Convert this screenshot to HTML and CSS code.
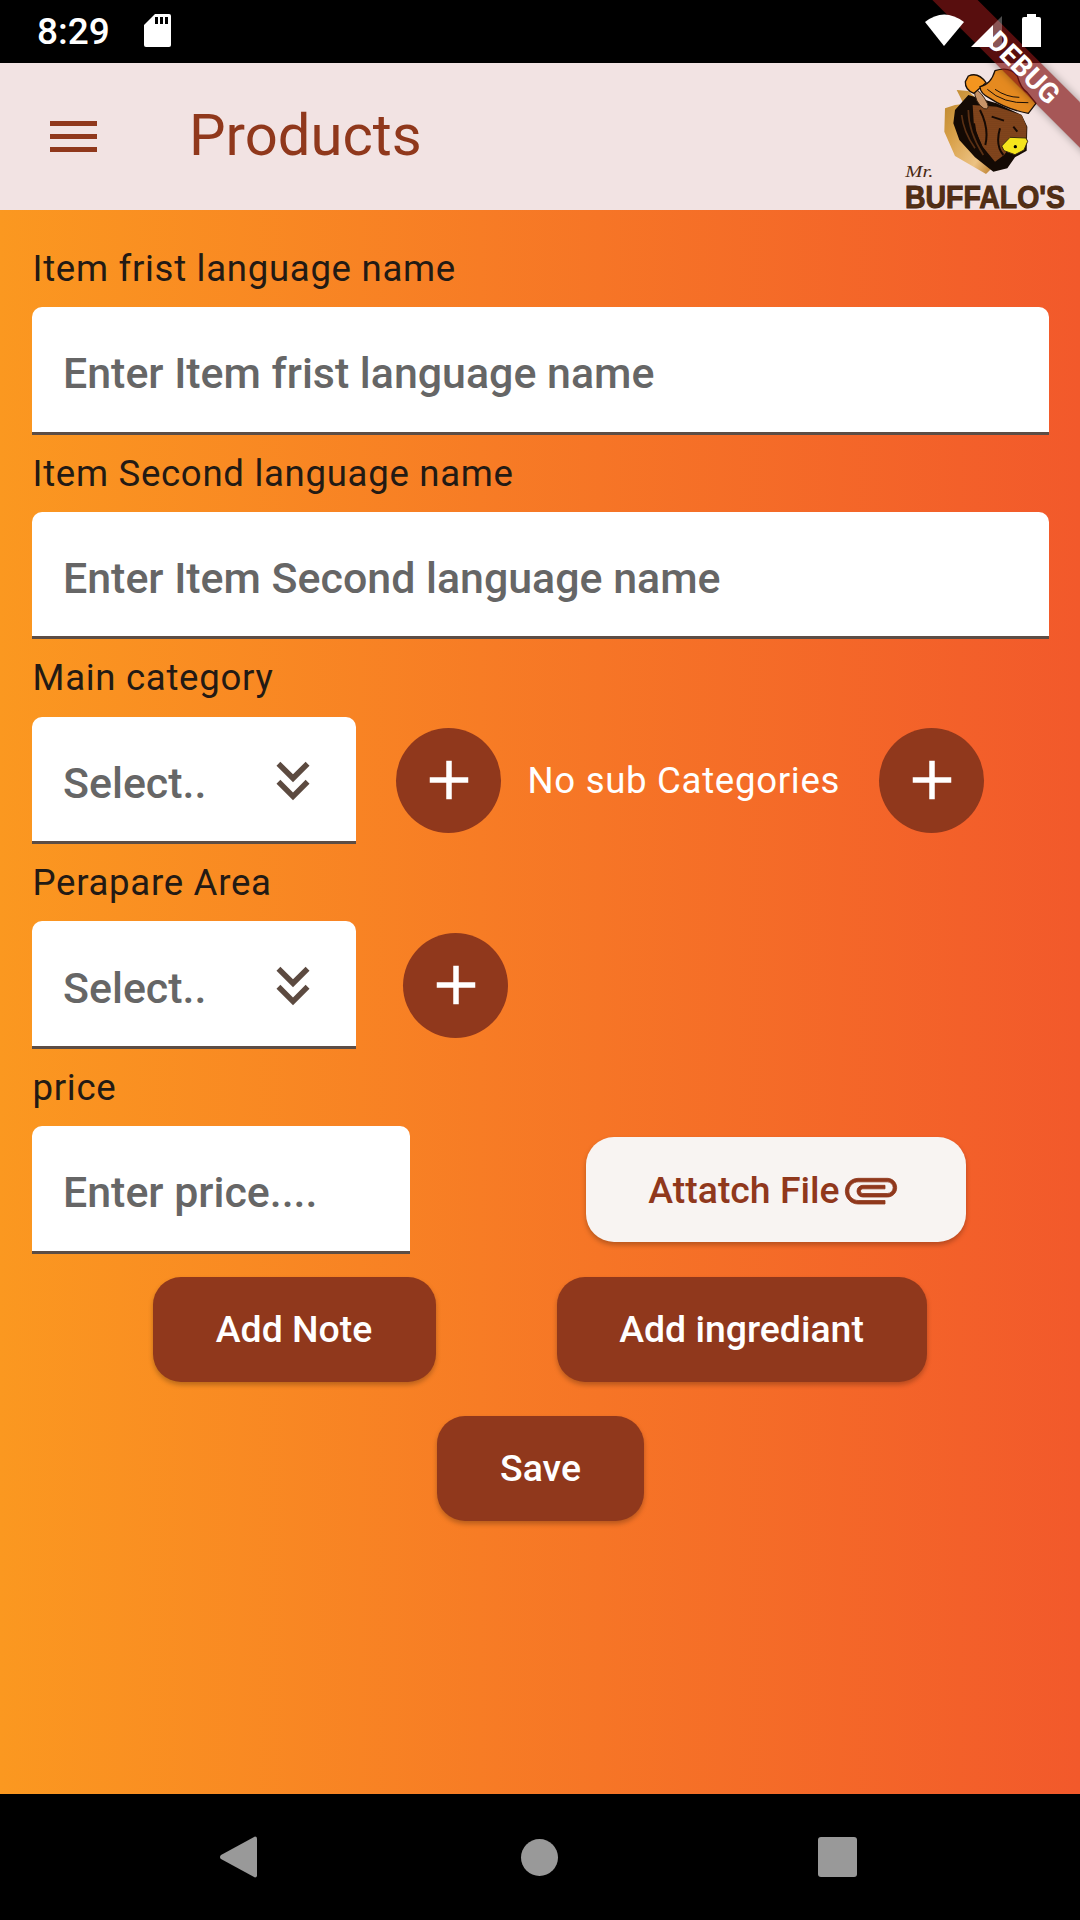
FILE: index.html
```html
<!DOCTYPE html>
<html lang="en">
<head>
<meta charset="utf-8">
<title>Products</title>
<link rel="stylesheet" href="styles.css">
</head>
<body>
<div class="status">
  <span class="time">8:29</span>
  <svg class="sd" viewBox="0 0 27 33"><path d="M11 0h14a2 2 0 0 1 2 2v29a2 2 0 0 1-2 2H2a2 2 0 0 1-2-2V11z" fill="#fff"/><path d="M11 3h3v7h-3zM16 3h3v7h-3zM21 3h3v7h-3z" fill="#000"/></svg>
  <svg class="sys" viewBox="0 0 120 36">
    <path d="M4 9Q23 -6 43 9L23 33z" fill="#fff"/>
    <path d="M50 34L72 12V34z" fill="#fff"/>
    <path d="M72 12L81 3V34H72z" fill="#fff" opacity=".3"/>
    <path d="M106 1h9v3h3a2 2 0 0 1 2 2v28h-19V6a2 2 0 0 1 2-2h3z" fill="#fff"/>
  </svg>
</div>
<header class="appbar">
  <svg class="menu" viewBox="0 0 47 31"><path d="M0 0h47v5H0zM0 13h47v5H0zM0 26h47v5H0z" fill="#90381c"/></svg>
  <h1 class="title">Products</h1>
  <svg class="logo" viewBox="0 9 540 441">
    <defs>
      <pattern id="dots" width="6" height="6" patternUnits="userSpaceOnUse"><rect width="6" height="6" fill="#8a4a1e"/><circle cx="3" cy="3" r="1.5" fill="#4a2410"/></pattern>
      <pattern id="txt" width="6" height="6" patternUnits="userSpaceOnUse"><rect width="6" height="6" fill="#5a3317"/><circle cx="3" cy="3" r="1.6" fill="#351b0a"/></pattern>
      <linearGradient id="gold" x1="0" y1="0" x2="1" y2="1"><stop offset="0" stop-color="#b9842c"/><stop offset=".35" stop-color="#d8a048"/><stop offset=".75" stop-color="#ecc283"/><stop offset="1" stop-color="#b97a26"/></linearGradient>
    </defs>
    <path d="M170 90L205 93 240 125 165 135 135 145 133 215 165 288 258 342 280 320 200 150z" fill="url(#gold)"/>
    <path d="M205 105L290 130 365 165 382 200 380 272 345 292 322 325 280 335 225 292 178 240 160 190 165 150z" fill="#140a04"/>
    <path d="M218 135L290 140 365 165 380 200 378 260 330 262 312 285 285 305 248 260 222 200z" fill="url(#dots)"/>
    <path d="M185 165Q190 215 225 265M205 150Q205 215 250 285" fill="none" stroke="#5a3014" stroke-width="5"/>
    <path d="M240 150Q268 205 256 255M275 170L312 182M300 205Q285 255 310 285M340 200L352 215M222 190Q225 235 262 290" fill="none" stroke="#160a04" stroke-width="6"/>
    <path d="M222 85Q245 95 262 130 270 150 252 146 225 130 222 85z" fill="#c89468" stroke="#3a2312" stroke-width="3"/>
    <path d="M205 48Q235 35 258 68L222 100Q195 90 196 65z" fill="#f4951f" stroke="#1a0f08" stroke-width="4"/>
    <path d="M240 80Q272 75 285 32 330 18 352 48 362 85 382 98L408 130 385 160Q320 148 270 115 240 100 240 80z" fill="#e58a20" stroke="#1a0f08" stroke-width="4"/>
    <path d="M262 88Q310 132 385 128M285 88Q320 112 358 112" fill="none" stroke="#1a0f08" stroke-width="3"/>
    <path d="M330 232L378 234 383 244 372 270 345 284 312 272 305 258z" fill="#f5e51c" stroke="#3a2a10" stroke-width="3"/>
    <circle cx="346" cy="260" r="5" fill="#000"/>
    <text class="logo-mr" x="16" y="352" textLength="84" lengthAdjust="spacingAndGlyphs">Mr.</text>
    <text class="logo-name" x="15" y="445" textLength="480" lengthAdjust="spacingAndGlyphs" fill="url(#txt)">BUFFALO'S</text>
  </svg>
</header>
<main class="form">
  <section class="block">
    <div class="label">Item frist language name</div>
    <div class="field field-full">Enter Item frist language name</div>
  </section>
  <section class="block">
    <div class="label">Item Second language name</div>
    <div class="field field-full">Enter Item Second language name</div>
  </section>
  <section class="block">
    <div class="label">Main category</div>
    <div class="row">
      <div class="field field-select">Select..
        <svg class="chev" viewBox="0 0 24 24"><path d="M18 6.41L16.59 5 12 9.58 7.41 5 6 6.41l6 6 6-6zM18 13l-1.41-1.41L12 16.17l-4.59-4.58L6 13l6 6 6-6z"/></svg>
      </div>
      <button class="fab fab-a"><svg viewBox="0 0 24 24"><path d="M19 13h-6v6h-2v-6H5v-2h6V5h2v6h6v2z"/></svg></button>
      <span class="none">No sub Categories</span>
      <button class="fab fab-c"><svg viewBox="0 0 24 24"><path d="M19 13h-6v6h-2v-6H5v-2h6V5h2v6h6v2z"/></svg></button>
    </div>
  </section>
  <section class="block">
    <div class="label">Perapare Area</div>
    <div class="row">
      <div class="field field-select">Select..
        <svg class="chev" viewBox="0 0 24 24"><path d="M18 6.41L16.59 5 12 9.58 7.41 5 6 6.41l6 6 6-6zM18 13l-1.41-1.41L12 16.17l-4.59-4.58L6 13l6 6 6-6z"/></svg>
      </div>
      <button class="fab fab-b"><svg viewBox="0 0 24 24"><path d="M19 13h-6v6h-2v-6H5v-2h6V5h2v6h6v2z"/></svg></button>
    </div>
  </section>
  <section class="block">
    <div class="label">price</div>
    <div class="row">
      <div class="field field-price">Enter price....</div>
      <button class="btn btn-light">Attatch File<svg class="clip" viewBox="0 0 24 24"><path transform="rotate(90 12 12)" d="M16.5 6v11.5c0 2.21-1.79 4-4 4s-4-1.79-4-4V5c0-1.38 1.12-2.5 2.5-2.5s2.5 1.12 2.5 2.5v10.5c0 .55-.45 1-1 1s-1-.45-1-1V6H10v9.5c0 1.38 1.12 2.5 2.5 2.5s2.5-1.12 2.5-2.5V5c0-2.21-1.79-4-4-4S7 2.79 7 5v12.5c0 3.04 2.46 5.5 5.5 5.5s5.5-2.46 5.5-5.5V6h-1.5z"/></svg></button>
    </div>
  </section>
  <div class="actions actions-pair">
    <button class="btn btn-note">Add Note</button>
    <button class="btn btn-ingredient">Add ingrediant</button>
  </div>
  <div class="actions actions-save">
    <button class="btn btn-save">Save</button>
  </div>
</main>
<nav class="navbar">
  <svg class="nav-back" viewBox="0 0 37 42"><path d="M35 0.5a2 2 0 0 1 2 2V39.5a2 2 0 0 1-2 2L1 23a2.5 2.5 0 0 1 0-4z"/></svg>
  <span class="nav-home"></span>
  <span class="nav-recent"></span>
</nav>
<div class="banner-clip"><div class="banner">DEBUG</div></div>
</body>
</html>
```
FILE: styles.css
```css
* { box-sizing: border-box; }
html, body { margin: 0; padding: 0; }
body {
  width: 1080px;
  height: 1920px;
  overflow: hidden;
  display: flex;
  flex-direction: column;
  position: relative;
  font-family: Roboto, "Noto Sans", sans-serif;
  background: #000;
}
.status {
  height: 63px;
  flex: none;
  background: #000;
  display: flex;
  align-items: center;
  padding-left: 37px;
}
.time {
  color: #fff;
  font-size: 37px;
  font-weight: 500;
  width: 107px;
  position: relative;
  z-index: 3;
}
.sd { width: 27px; height: 33px; position: relative; z-index: 3; margin-top: -2px; }
.sys { width: 120px; height: 36px; margin-left: auto; position: relative; z-index: 3; margin-right: 39px; margin-top: -1px; }

.appbar {
  height: 147px;
  flex: none;
  background: #f2e3e3;
  display: flex;
  align-items: center;
  padding-left: 50px;
}
.menu { width: 47px; height: 31px; flex: none; }
.title {
  margin: 0 0 0 92px;
  padding-bottom: 4px;
  font-size: 58px;
  font-weight: 400;
  color: #90381c;
  line-height: 1;
}
.logo { width: 180px; height: 147px; margin-left: auto; flex: none; overflow: visible; }
.logo-mr { font-family: "Liberation Serif", serif; font-style: italic; font-size: 52px; fill: #4a2a14; }
.logo-name { font-family: "Liberation Sans", sans-serif; font-weight: 700; font-size: 96px; stroke: #4a2a14; stroke-width: 3px; }

.form {
  flex: 1;
  padding: 19.75px 31px 0 32px;
  background: linear-gradient(90deg, #fb9820, #f2592b);
}
.block { display: flex; flex-direction: column; }
.label {
  height: 77.25px;
  padding: 16px 0 0 .5px;
  font-size: 36.6px;
  line-height: 46px;
  letter-spacing: .7px;
  color: #231a14;
}
.row { display: flex; align-items: center; height: 127.5px; }
.field {
  height: 127.5px;
  background: #fff;
  border-radius: 10px 10px 0 0;
  border-bottom: 3px solid #5c4d45;
  padding: 8px 32px 0 31px;
  display: flex;
  align-items: center;
  font-size: 42.9px;
  font-weight: 500;
  color: #666;
  flex: none;
}
.field-full { width: 1017px; }
.field-select { width: 324px; }
.field-price { width: 378px; }
.chev { width: 66px; height: 66px; margin-left: auto; margin-right: -2px; margin-top: -4px; fill: #5c4a40; flex: none; }
.fab {
  width: 105px;
  height: 105px;
  border: 0;
  padding: 0;
  border-radius: 50%;
  background: #90381c;
  display: flex;
  align-items: center;
  justify-content: center;
  flex: none;
}
.fab svg { width: 66px; height: 66px; fill: #fff; }
.fab-a { margin-left: 40px; }
.fab-b { margin-left: 47px; }
.fab-c { margin-left: 40px; }
.none { margin-left: 26.5px; width: 311.5px; font-size: 36.6px; color: #fff; letter-spacing: .7px; white-space: nowrap; flex: none; }

.btn {
  height: 105px;
  border: 0;
  padding: 0;
  border-radius: 28px;
  background: #90381c;
  color: #fff;
  font-family: inherit;
  font-size: 37.4px;
  font-weight: 500;
  box-shadow: 0 3px 5px rgba(0, 0, 0, .25);
  display: flex;
  align-items: center;
  justify-content: center;
  flex: none;
}
.btn-light { width: 380px; margin-left: 176px; padding-right: 5px; background: #f8f4f2; color: #90381c; }
.clip { width: 56px; height: 58px; fill: #90381c; stroke: #90381c; stroke-width: .35; flex: none; margin-left: 3px; }
.actions { display: flex; justify-content: center; }
.actions-pair { gap: 121px; margin-top: 23px; padding-right: 2px; }
.actions-save { margin-top: 34px; }
.btn-note { width: 283px; }
.btn-ingredient { width: 370px; }
.btn-save { width: 207px; }

.navbar {
  height: 126px;
  flex: none;
  background: #000;
  display: flex;
  align-items: center;
  padding: 0 223px 0 220px;
  justify-content: space-between;
}
.nav-back { width: 37px; height: 42px; fill: #999; }
.nav-home { width: 37px; height: 37px; border-radius: 50%; background: #999; margin-left: 4px; }
.nav-recent { width: 39px; height: 40px; border-radius: 3px; background: #999; }

.banner-clip {
  position: absolute;
  top: 0;
  right: 0;
  width: 170px;
  height: 170px;
  overflow: hidden;
  z-index: 2;
  pointer-events: none;
}
.banner {
  position: absolute;
  left: -37px;
  top: 52px;
  width: 300px;
  height: 32px;
  transform: rotate(45deg);
  background: rgba(130, 20, 20, .68);
  box-shadow: 0 0 8px rgba(0, 0, 0, .35);
  color: #fff;
  font-size: 28px;
  font-weight: 700;
  line-height: 32px;
  text-align: center;
}
```
